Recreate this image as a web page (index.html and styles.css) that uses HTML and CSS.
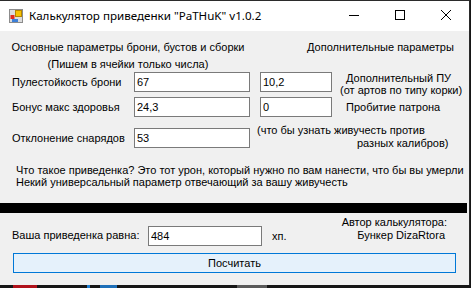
FILE: index.html
```html
<!DOCTYPE html>
<html lang="ru">
<head>
  <meta charset="UTF-8" />
  <title>Калькулятор приведенки "PaTHuK" v1.0.2</title>
  <link rel="stylesheet" href="styles.css">
</head>
<body>
  <div class="window">
    <div class="titlebar">
      <svg class="app-icon" viewBox="0 0 14 14">
        <rect x="0.5" y="0.5" width="13" height="13" fill="#dcdcdc" stroke="#8c8c8c"/>
        <rect x="6.5" y="1.5" width="6" height="6" fill="#f6c200" stroke="#b58600"/>
        <rect x="1.5" y="6" width="4" height="4" fill="#e12a1f"/>
        <rect x="3" y="10" width="6" height="3" fill="#3c7fd8"/>
      </svg>
      <span class="title">Калькулятор приведенки "PaTHuK" v1.0.2</span>
      <div class="controls">
        <span class="ctl"><svg width="10" height="10" viewBox="0 0 10 10"><path d="M0 5.5H10" stroke="#000"/></svg></span>
        <span class="ctl"><svg width="10" height="10" viewBox="0 0 10 10"><rect x="0.5" y="0.5" width="9" height="9" fill="none" stroke="#000"/></svg></span>
        <span class="ctl"><svg width="10" height="10" viewBox="0 0 10 10"><path d="M0 0L10 10M10 0L0 10" stroke="#000"/></svg></span>
      </div>
    </div>

    <div class="client">
      <div class="heads">
        <div class="main-head">
          <div>Основные параметры брони, бустов и сборки</div>
          <div class="hint">(Пишем в ячейки только числа)</div>
        </div>
        <div class="extra-head">Дополнительные параметры</div>
      </div>

      <div class="param-row r1">
        <label class="param-label">Пулестойкость брони</label>
        <input class="field main" type="text" value="67" />
        <input class="field extra" type="text" value="10,2" />
        <div class="side-note note1">
          <div class="indent">Дополнительный ПУ</div>
          <div>(от артов по типу корки)</div>
        </div>
      </div>

      <div class="param-row r2">
        <label class="param-label">Бонус макс здоровья</label>
        <input class="field main" type="text" value="24,3" />
        <input class="field extra" type="text" value="0" />
        <div class="side-note note2">Пробитие патрона</div>
      </div>

      <div class="param-row r3">
        <label class="param-label">Отклонение снарядов</label>
        <input class="field main" type="text" value="53" />
        <div class="side-note note3">
          <div>(что бы узнать живучесть против</div>
          <div class="far">разных калибров)</div>
        </div>
      </div>

      <div class="info">
        <div>Что такое приведенка? Это тот урон, который нужно по вам нанести, что бы вы умерли</div>
        <div>Некий универсальный параметр отвечающий за вашу живучесть</div>
      </div>

      <div class="divider"></div>

      <div class="result">
        <label class="result-label">Ваша приведенка равна:</label>
        <input class="field total" type="text" value="484" />
        <span class="unit">хп.</span>
        <div class="author">
          <div>Автор калькулятора:</div>
          <div class="author-name">Бункер DizaRtora</div>
        </div>
      </div>

      <button class="calc" type="button">Посчитать</button>
    </div>
  </div>

  <div class="desktop">
    <span class="bit red"></span>
    <span class="bit blue1"></span>
    <span class="bit blue2"></span>
    <span class="bit gray"></span>
  </div>
</body>
</html>
```

FILE: styles.css
```css
* {
  box-sizing: border-box;
}
body {
  margin: 0;
  width: 471px;
  height: 288px;
  overflow: hidden;
  background: #161616;
  font-family: "Liberation Sans", Arial, sans-serif;
  font-size: 11px;
  color: #000;
}
.window {
  width: 470px;
  background: #f0f0f0;
  border-top: 1px solid #2b2b2b;
  border-right: 1px solid #2b2b2b;
}

/* title bar */
.titlebar {
  height: 30px;
  background: #fff;
  display: flex;
  align-items: center;
}
.app-icon {
  width: 14px;
  height: 14px;
  margin-left: 9px;
  margin-top: -1px;
}
.title {
  margin-left: 6px;
  margin-top: -2px;
  font-family: "Noto Sans", sans-serif;
  font-size: 11.6px;
}
.controls {
  margin-left: auto;
  display: flex;
  height: 100%;
}
.ctl {
  width: 46px;
  display: flex;
  align-items: center;
  justify-content: center;
}
.ctl svg {
  margin-top: -2px;
}

/* client area */
.client {
  height: 254px;
  padding: 10px 0 0 12px;
  line-height: 13px;
  white-space: nowrap;
}
.heads {
  display: flex;
}
.main-head {
  width: 232px;
  display: flex;
  flex-direction: column;
  align-items: center;
}
.hint {
  margin-top: 4px;
}
.extra-head {
  margin-left: 63px;
}

.param-row {
  display: flex;
  align-items: flex-start;
  height: 20px;
}
.r1 { margin-top: 1px; }
.r2 { margin-top: 5px; }
.r3 { margin-top: 11px; }

.param-label {
  width: 122px;
  padding-top: 4px;
}
.field {
  height: 20px;
  padding: 0 2px;
  border: 1px solid #7a7a7a;
  background: #fff;
  font: inherit;
  color: #000;
  outline: none;
}
.field.main {
  width: 116px;
}
.field.extra {
  width: 72px;
  margin-left: 10px;
}
.side-note {
  margin-left: 8px;
  line-height: 12px;
}
.note1 .indent {
  padding-left: 6px;
}
.note2 {
  margin-left: 14px;
  padding-top: 4px;
}
.note3 {
  margin-left: 7px;
  margin-top: -4px;
  line-height: 13px;
}
.note3 .far {
  padding-left: 100px;
}

.info {
  margin-top: 16px;
  padding-left: 4px;
  line-height: 12px;
}

.divider {
  margin: 15px 0 0 -12px;
  width: 467px;
  height: 10px;
  background: #000;
}

.result {
  display: flex;
  align-items: flex-start;
  height: 30px;
  margin-top: 3px;
}
.result-label {
  width: 136px;
  padding-top: 13px;
}
.field.total {
  width: 114px;
  margin-top: 10px;
}
.unit {
  margin-left: 10px;
  padding-top: 14px;
}
.author {
  margin-left: auto;
  margin-right: 22px;
  text-align: right;
}
.author-name {
  padding-right: 2px;
}

.calc {
  display: block;
  width: 443px;
  height: 20px;
  margin: 7px 0 0 1px;
  padding: 0;
  background: #e5f1fb;
  border: 1px solid #0078d7;
  font: inherit;
  color: #000;
}

/* bits of desktop below the window */
.desktop {
  height: 3px;
  display: flex;
}
.bit {
  height: 3px;
}
.red {
  width: 24px;
  margin-left: 13px;
  background: #b0121b;
}
.blue1 {
  width: 3px;
  margin-left: 50px;
  background: #1e7ed0;
}
.blue2 {
  width: 17px;
  margin-left: 10px;
  background: #1e6fb8;
}
.gray {
  width: 30px;
  margin-left: 120px;
  background: #5a5a5a;
}
```
